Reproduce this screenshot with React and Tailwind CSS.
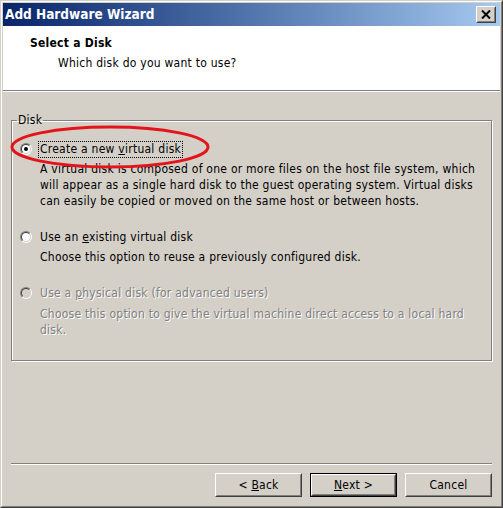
import React from 'react'

const FONT = "font-['DejaVu_Sans_Condensed','Liberation_Sans',Arial,sans-serif]"

function Radio({ checked, disabled }) {
  return (
    <span className="flex h-3 w-3 shrink-0 rounded-full border border-t-[#808080] border-l-[#808080] border-r-white border-b-white">
      <span
        className={[
          'flex flex-1 items-center justify-center rounded-full border border-t-[#404040] border-l-[#404040] border-r-[#d4d0c8] border-b-[#d4d0c8]',
          disabled ? 'bg-[#d4d0c8]' : 'bg-white',
        ].join(' ')}
      >
        {checked && <span className="h-1 w-1 rounded-full bg-black" />}
      </span>
    </span>
  )
}

function Option({ checked, disabled, focused, label, children, className }) {
  const text = disabled ? 'text-[#808080] [text-shadow:1px_1px_0_#fff]' : 'text-black'
  return (
    <div className={className}>
      <div className="flex h-4 items-center gap-[7px] pl-[8px]">
        <Radio checked={checked} disabled={disabled} />
        <span
          className={[
            'px-[1px] leading-[15px]',
            focused ? 'outline outline-1 outline-dotted outline-black' : '',
            text,
          ].join(' ')}
        >
          {label}
        </span>
      </div>
      <p className={['pl-[28px] pr-2 leading-4', text].join(' ')}>{children}</p>
    </div>
  )
}

function Button({ children, isDefault }) {
  return (
    <button
      type="button"
      className={[
        'flex h-6 w-[87px] items-stretch',
        isDefault ? 'border border-black' : '',
      ].join(' ')}
    >
      <span className="flex flex-1 border border-t-white border-l-white border-r-[#404040] border-b-[#404040]">
        <span className="flex flex-1 items-center justify-center border border-t-[#d4d0c8] border-l-[#d4d0c8] border-r-[#808080] border-b-[#808080] bg-[#d4d0c8] text-black">
          <span>{children}</span>
        </span>
      </span>
    </button>
  )
}

export default function App() {
  return (
    <div className={`${FONT} h-[508px] w-[503px] text-[12px] tracking-[0.25px]`}>
      {/* Window frame */}
      <div className="flex h-full flex-col border border-t-[#d4d0c8] border-l-[#d4d0c8] border-r-[#404040] border-b-[#404040] bg-[#d4d0c8]">
        <div className="flex flex-1 flex-col border border-t-white border-l-white border-r-[#808080] border-b-[#808080] p-px">
          {/* Title bar */}
          <div className="flex h-[23px] items-center justify-between bg-gradient-to-r from-[#0a246a] to-[#a6caf0] pl-[2px] pr-[4px]">
            <span className="text-[13.5px] font-bold tracking-normal text-white">Add Hardware Wizard</span>
            <span className="flex h-[17px] w-[20px] border border-t-white border-l-white border-r-[#404040] border-b-[#404040]">
              <span className="flex flex-1 items-center justify-center border border-t-[#d4d0c8] border-l-[#d4d0c8] border-r-[#808080] border-b-[#808080] bg-[#d4d0c8]">
                <svg width="10" height="9" viewBox="0 0 10 9">
                  <path d="M1 0.5 L9 8.5 M9 0.5 L1 8.5" stroke="black" strokeWidth="2" />
                </svg>
              </span>
            </span>
          </div>

          {/* Header */}
          <div className="h-[64px] bg-white pt-[9px]">
            <p className="pl-[27px] font-bold leading-4">Select a Disk</p>
            <p className="mt-1 pl-[55px] leading-4">Which disk do you want to use?</p>
          </div>
          <div className="h-px bg-[#808080]" />
          <div className="h-px bg-white" />

          {/* Body */}
          <div className="relative flex flex-1 flex-col px-[8px] pt-[20px]">
            <fieldset className="h-[249px] border border-[#808080] shadow-[inset_1px_1px_0_#fff,1px_1px_0_#fff]">
              <legend className="ml-[5px] px-[1px] leading-4">Disk</legend>
              <Option checked focused className="mt-[13px]" label={<>Create a new <u>v</u>irtual disk</>}>
                <span className="mt-[4px] block">
                  A virtual disk is composed of one or more files on the host file system, which will
                  appear as a single hard disk to the guest operating system. Virtual disks can easily
                  be copied or moved on the same host or between hosts.
                </span>
              </Option>
              <Option className="mt-[20px]" label={<>Use an <u>e</u>xisting virtual disk</>}>
                <span className="mt-[4px] block">Choose this option to reuse a previously configured disk.</span>
              </Option>
              <Option disabled className="mt-[20px]" label={<>Use a <u>p</u>hysical disk (for advanced users)</>}>
                <span className="mt-[5px] block">
                  Choose this option to give the virtual machine direct access to a local hard disk.
                </span>
              </Option>
            </fieldset>

            {/* Annotation */}
            <svg className="pointer-events-none absolute" width="503" height="120" viewBox="0 0 503 120" style={{ top: -2, left: -3 }}>
              <ellipse cx="110" cy="57" rx="98" ry="20" fill="none" stroke="#e3141b" strokeWidth="3" />
            </svg>

            <div className="flex-1" />
            <div className="h-px bg-[#808080]" />
            <div className="h-px bg-white" />
            <div className="flex justify-end gap-2 pt-[8px] pb-[8px]">
              <Button>&lt; <u>B</u>ack</Button>
              <Button isDefault><u>N</u>ext &gt;</Button>
              <Button>Cancel</Button>
            </div>
          </div>
        </div>
      </div>
    </div>
  )
}
